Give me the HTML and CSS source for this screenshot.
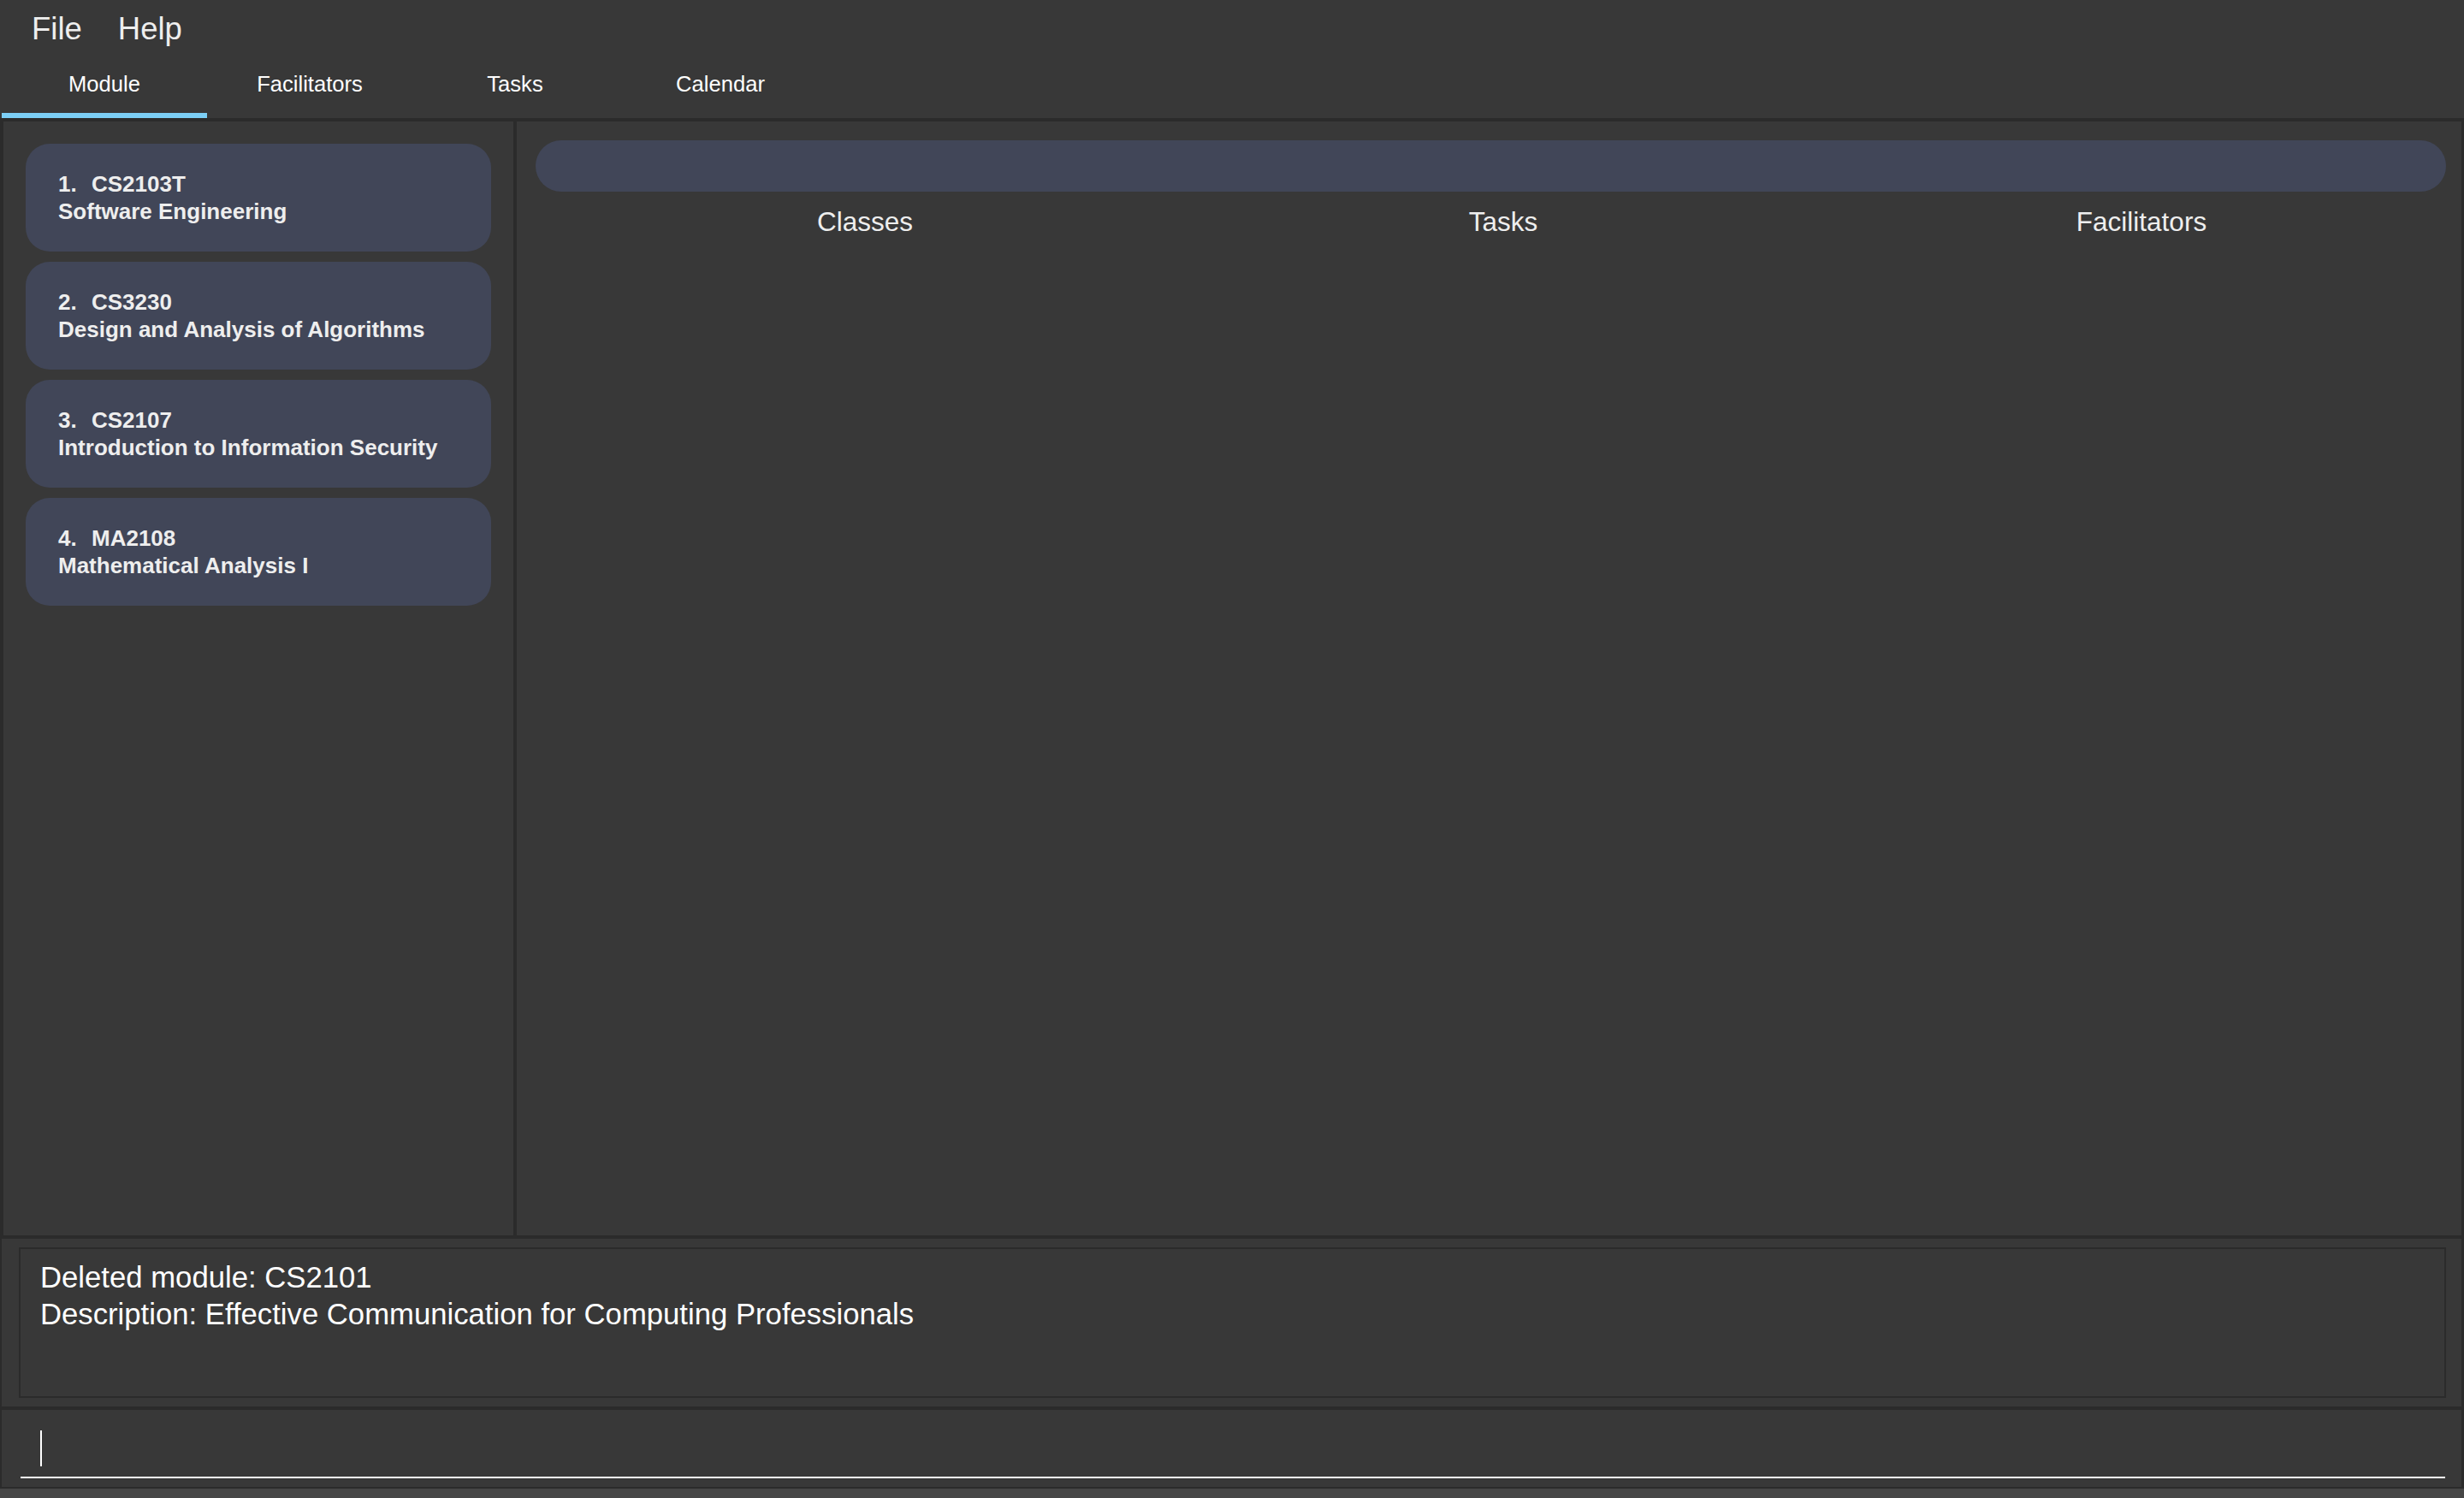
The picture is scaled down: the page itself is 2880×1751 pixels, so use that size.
FILE: index.html
```html
<!DOCTYPE html>
<html lang="en">
<head>
<meta charset="utf-8">
<title>Modules</title>
<link rel="stylesheet" href="styles.css">
</head>
<body>
<div class="app">
  <div class="menubar">
    <span class="menu-item">File</span>
    <span class="menu-item">Help</span>
  </div>
  <div class="tabs">
    <div class="tab active">Module</div>
    <div class="tab">Facilitators</div>
    <div class="tab">Tasks</div>
    <div class="tab">Calendar</div>
  </div>
  <div class="main">
    <div class="left-panel">
      <div class="card">
        <div class="card-line"><span class="card-id">1.</span><span>CS2103T</span></div>
        <div class="card-line">Software Engineering</div>
      </div>
      <div class="card">
        <div class="card-line"><span class="card-id">2.</span><span>CS3230</span></div>
        <div class="card-line">Design and Analysis of Algorithms</div>
      </div>
      <div class="card">
        <div class="card-line"><span class="card-id">3.</span><span>CS2107</span></div>
        <div class="card-line">Introduction to Information Security</div>
      </div>
      <div class="card">
        <div class="card-line"><span class="card-id">4.</span><span>MA2108</span></div>
        <div class="card-line">Mathematical Analysis I</div>
      </div>
    </div>
    <div class="right-panel">
      <div class="search-bar"></div>
      <div class="headers">
        <div class="header">Classes</div>
        <div class="header">Tasks</div>
        <div class="header">Facilitators</div>
      </div>
    </div>
  </div>
  <div class="result">
    <div class="result-box">
      <div>Deleted module: CS2101</div>
      <div>Description: Effective Communication for Computing Professionals</div>
    </div>
  </div>
  <div class="command">
    <div class="command-input"><span class="caret"></span></div>
  </div>
  <div class="status"></div>
</div>
</body>
</html>
```

FILE: styles.css
```css
* {
  box-sizing: border-box;
}

html, body {
  margin: 0;
  padding: 0;
  background: #383838;
}

body {
  font-family: "Liberation Sans", Arial, sans-serif;
  color: #eeeeee;
}

.app {
  width: 2880px;
  height: 1751px;
  display: flex;
  flex-direction: column;
  background: #383838;
  overflow: hidden;
}

.menubar {
  height: 64px;
  flex: none;
  display: flex;
  align-items: center;
  gap: 42px;
  padding-left: 37px;
  padding-top: 3px;
  font-size: 36.5px;
  line-height: 61px;
  color: #eeeeee;
}

.tabs {
  height: 74px;
  flex: none;
  display: flex;
  padding-left: 2px;
}

.tab {
  width: 240px;
  height: 74px;
  text-align: center;
  font-size: 25.6px;
  line-height: 68px;
  color: #ffffff;
  border-bottom: 6px solid transparent;
}

.tab.active {
  border-bottom-color: #7ccff6;
}

.main {
  height: 1310px;
  flex: none;
  display: flex;
  border-top: 4px solid #2b2b2b;
  border-bottom: 4px solid #2b2b2b;
}

.left-panel {
  width: 604px;
  flex: none;
  border-left: 4px solid #2b2b2b;
  border-right: 4px solid #2b2b2b;
  padding: 26px 26px 0 26px;
  display: flex;
  flex-direction: column;
  gap: 12px;
}

.card {
  height: 126px;
  background: #414658;
  border-radius: 28px;
  padding-left: 38px;
  display: flex;
  flex-direction: column;
  justify-content: center;
  font-weight: bold;
  font-size: 26px;
  line-height: 32px;
  color: #eeeeee;
}

.card-id {
  display: inline-block;
  width: 39px;
}

.right-panel {
  flex: 1;
  border-right: 3px solid #2b2b2b;
  padding: 22px 18px 0 22px;
}

.search-bar {
  height: 60px;
  background: #414658;
  border-radius: 30px;
}

.headers {
  display: grid;
  grid-template-columns: repeat(3, 1fr);
  margin: 17px -17px 0 12px;
}

.header {
  text-align: center;
  font-size: 31.5px;
  line-height: 36px;
  color: #eeeeee;
}

.result {
  height: 200px;
  flex: none;
  border-left: 2px solid #2b2b2b;
  border-right: 3px solid #2b2b2b;
  border-bottom: 4px solid #2b2b2b;
  padding: 10px 18px 0 20px;
}

.result-box {
  height: 176px;
  border: 2px solid #2b2b2b;
  padding: 12px 0 0 23px;
  font-size: 34.7px;
  line-height: 43px;
  color: #ffffff;
}

.command {
  height: 92px;
  flex: none;
  border-left: 2px solid #2b2b2b;
  border-right: 3px solid #2b2b2b;
  border-bottom: 2px solid #2b2b2b;
  padding: 24px 19px 10px 22px;
}

.command-input {
  height: 56px;
  border-bottom: 2px solid #ffffff;
  padding-left: 23px;
}

.caret {
  display: block;
  width: 2px;
  height: 42px;
  background: #ffffff;
}

.status {
  flex: 1;
  background: #464646;
}
```
